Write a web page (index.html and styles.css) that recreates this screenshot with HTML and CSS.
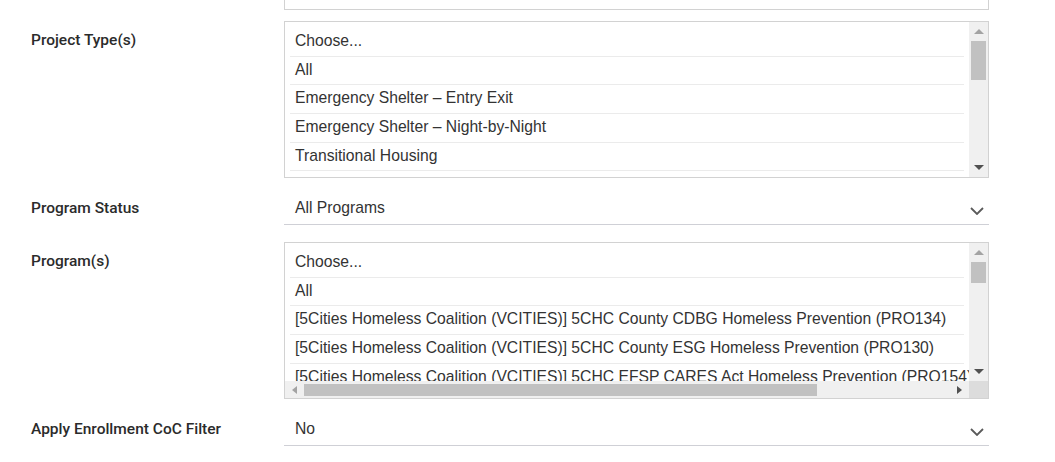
FILE: index.html
```html
<!DOCTYPE html>
<html lang="en">
<head>
  <meta charset="UTF-8">
  <meta name="viewport" content="width=device-width,initial-scale=1">
  <title>Report filters</title>
  <link rel="stylesheet" href="styles.css">
</head>
<body>

  <div class="form">

    <div class="row row-stub">
      <div class="label"></div>
      <div class="field"><div class="stub"></div></div>
    </div>

    <div class="row row-list">
      <div class="label">Project Type(s)</div>
      <div class="field">
        <div class="listbox">
          <div class="list">
            <div class="opt">Choose...</div>
            <div class="opt">All</div>
            <div class="opt">Emergency Shelter – Entry Exit</div>
            <div class="opt">Emergency Shelter – Night-by-Night</div>
            <div class="opt">Transitional Housing</div>
            <div class="opt">PH – Permanent Supportive Housing</div>
            <div class="opt">Street Outreach</div>
            <div class="opt">Services Only</div>
            <div class="opt">Other</div>
            <div class="opt">Safe Haven</div>
            <div class="opt">PH – Housing Only</div>
            <div class="opt">PH – Housing with Services</div>
            <div class="opt">Day Shelter</div>
            <div class="opt">Homelessness Prevention</div>
            <div class="opt">PH – Rapid Re-Housing</div>
            <div class="opt">Coordinated Entry</div>
          </div>
          <div class="vbar">
            <div class="sb-btn"><i class="tri up off"></i></div>
            <div class="sb-track"><div class="thumb-v" style="height:39px"></div></div>
            <div class="sb-btn"><i class="tri down"></i></div>
          </div>
        </div>
      </div>
    </div>

    <div class="row row-select">
      <div class="label">Program Status</div>
      <div class="field">
        <div class="select">
          <span>All Programs</span>
          <svg class="chev" width="14" height="8" viewBox="0 0 14 8"><polyline points="1,1 7,7 13,1" fill="none" stroke="#5a5a5a" stroke-width="1.8"/></svg>
        </div>
      </div>
    </div>

    <div class="row row-list">
      <div class="label">Program(s)</div>
      <div class="field">
        <div class="listbox listbox-wide">
          <div class="list">
            <div class="opt">Choose...</div>
            <div class="opt">All</div>
            <div class="opt">[5Cities Homeless Coalition (VCITIES)] 5CHC County CDBG Homeless Prevention (PRO134)</div>
            <div class="opt">[5Cities Homeless Coalition (VCITIES)] 5CHC County ESG Homeless Prevention (PRO130)</div>
            <div class="opt">[5Cities Homeless Coalition (VCITIES)] 5CHC EFSP CARES Act Homeless Prevention (PRO154)</div>
            <div class="opt">[5Cities Homeless Coalition (VCITIES)] 5CHC ESG-CV Rapid Re-Housing (PRO162)</div>
            <div class="opt">[5Cities Homeless Coalition (VCITIES)] 5CHC Family Shelter (PRO120)</div>
            <div class="opt">[5Cities Homeless Coalition (VCITIES)] 5CHC HHAP Rapid Re-Housing (PRO171)</div>
          </div>
          <div class="vbar">
            <div class="sb-btn"><i class="tri up off"></i></div>
            <div class="sb-track"><div class="thumb-v" style="height:21px"></div></div>
            <div class="sb-btn"><i class="tri down"></i></div>
          </div>
          <div class="hbar">
            <div class="sb-btn"><i class="tri left off"></i></div>
            <div class="sb-track"><div class="thumb-h" style="width:513px"></div></div>
            <div class="sb-btn"><i class="tri right"></i></div>
          </div>
          <div class="corner"></div>
        </div>
      </div>
    </div>

    <div class="row row-select">
      <div class="label">Apply Enrollment CoC Filter</div>
      <div class="field">
        <div class="select">
          <span>No</span>
          <svg class="chev" width="14" height="8" viewBox="0 0 14 8"><polyline points="1,1 7,7 13,1" fill="none" stroke="#5a5a5a" stroke-width="1.8"/></svg>
        </div>
      </div>
    </div>

  </div>

</body>
</html>
```

FILE: styles.css
```css
:root {
  --text:   #333;
  --label:  #2b2b2b;
  --border: #d2d2d2;
  --line:   #ebebeb;
  --under:  #cfd0d6;
  --track:  #f0f0f0;
  --thumb:  #c1c1c1;
  --arrow:  #505050;
  --arrow-off: #a3a3a3;
}
*, *::before, *::after { box-sizing: border-box; }
body {
  margin: 0;
  background: #fff;
  color: var(--text);
  font-family: "Liberation Sans", Arial, sans-serif;
}

.form {
  padding-left: 31px;
}
.row {
  display: grid;
  grid-template-columns: 253px 705px;
}
.label {
  font-family: Roboto, "Noto Sans", sans-serif;
  font-weight: 500;
  font-size: 15.5px;
  line-height: 18px;
  color: var(--label);
}

/* bottom of the field above, cut by the window */
.stub {
  height: 10px;
  border: 1px solid var(--border);
  border-top: none;
}
.row-stub { margin-bottom: 11px; }

/* list boxes */
.row-list { margin-bottom: 13px; }
.row-list .label { padding-top: 10px; }
.listbox {
  height: 157px;
  border: 1px solid var(--border);
  display: grid;
  grid-template-columns: 1fr 19px;
  grid-template-rows: 1fr;
}
.listbox-wide { grid-template-rows: 1fr 17px; }
.list {
  overflow: hidden;
  padding: 6px 5px 0 5px;
  min-width: 0;
}
.opt {
  padding: 0 5px 1px;
  line-height: 26.67px;
  font-size: 15.7px;
  border-bottom: 1px solid var(--line);
  white-space: nowrap;
}

/* drawn scrollbars */
.vbar, .hbar {
  display: flex;
  background: var(--track);
}
.vbar { flex-direction: column; }
.sb-btn {
  flex: 0 0 19px;
  display: flex;
  align-items: center;
  justify-content: center;
}
.sb-track { flex: 1; }
.thumb-v {
  margin: 0 2px;
  background: var(--thumb);
}
.thumb-h {
  height: 12px;
  margin-top: 3px;
  background: var(--thumb);
}
.corner { background: #dcdcdc; }
.tri { width: 0; height: 0; border-style: solid; border-color: transparent; }
.tri.up    { border-width: 0 5px 5px;  border-bottom-color: var(--arrow); }
.tri.down  { border-width: 5px 5px 0;  border-top-color: var(--arrow); }
.tri.left  { border-width: 4.5px 5px 4.5px 0; border-right-color: var(--arrow); }
.tri.right { border-width: 4.5px 0 4.5px 5px; border-left-color: var(--arrow); }
.tri.up.off   { border-bottom-color: var(--arrow-off); }
.tri.left.off { border-right-color: var(--arrow-off); }

/* single selects */
.row-select { margin-bottom: 17px; }
.row-select .label { padding-top: 8px; }
.select {
  height: 34px;
  display: flex;
  align-items: center;
  justify-content: space-between;
  padding: 0 5px 0 11px;
  border-bottom: 1px solid var(--under);
  font-size: 15.7px;
}
.chev { margin-top: 7px; }
```
